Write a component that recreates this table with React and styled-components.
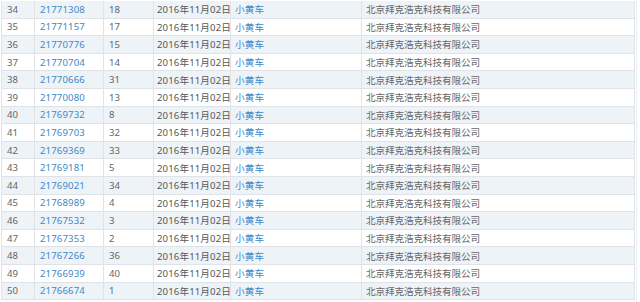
import styled, { createGlobalStyle } from 'styled-components';

const GlobalStyle = createGlobalStyle`
  html, body {
    margin: 0;
    padding: 0;
    background: #fff;
  }
  body {
    font-family: "Noto Sans", "Noto Sans CJK SC", sans-serif;
  }
`;

const rows = [
  [34, '21771308', 18],
  [35, '21771157', 17],
  [36, '21770776', 15],
  [37, '21770704', 14],
  [38, '21770666', 31],
  [39, '21770080', 13],
  [40, '21769732', 8],
  [41, '21769703', 32],
  [42, '21769369', 33],
  [43, '21769181', 5],
  [44, '21769021', 34],
  [45, '21768989', 4],
  [46, '21767532', 3],
  [47, '21767353', 2],
  [48, '21767266', 36],
  [49, '21766939', 40],
  [50, '21766674', 1],
];

const Frame = styled.div`
  width: 637px;
  height: 302px;
  padding-top: 1px;
  padding-left: 1px;
  box-sizing: border-box;
  border-right: 1px solid #eceff2;
  overflow: hidden;
`;

const Table = styled.div`
  width: 632px;
  border-left: 1px solid #dfe4ea;
  border-right: 1px solid #dfe4ea;
`;

const Row = styled.div`
  display: grid;
  grid-template-columns: 32px 69px 50px 77px 131px 271px;
  height: 17.6px;
  box-sizing: border-box;
  border-bottom: 1px solid #dfe3e8;
  background: ${({ $shade }) => ($shade ? '#eef3f8' : '#ffffff')};
`;

const Cell = styled.div`
  display: flex;
  align-items: center;
  padding-left: ${({ $pad }) => $pad || 5}px;
  border-left: ${({ $first }) => ($first ? 'none' : '1px solid #dfe4ea')};
  font-size: 9.6px;
  letter-spacing: ${({ $cjk }) => ($cjk ? '-0.1px' : '0.12px')};
  white-space: nowrap;
  overflow: hidden;
  color: ${({ $tone }) =>
    $tone === 'link' ? '#4189c8' : $tone === 'dark' ? '#575757' : '#666666'};
`;

export default function App() {
  return (
    <>
      <GlobalStyle />
      <Frame>
        <Table>
          {rows.map(([n, id, count]) => (
            <Row key={n} $shade={n % 2 === 0}>
              <Cell $first $pad={5}>{n}</Cell>
              <Cell $tone="link">{id}</Cell>
              <Cell>{count}</Cell>
              <Cell $tone="dark" $pad={3}>2016年11月02日</Cell>
              <Cell $tone="link" $pad={4}>小黄车</Cell>
              <Cell $cjk $pad={4}>北京拜克浩克科技有限公司</Cell>
            </Row>
          ))}
        </Table>
      </Frame>
    </>
  );
}
